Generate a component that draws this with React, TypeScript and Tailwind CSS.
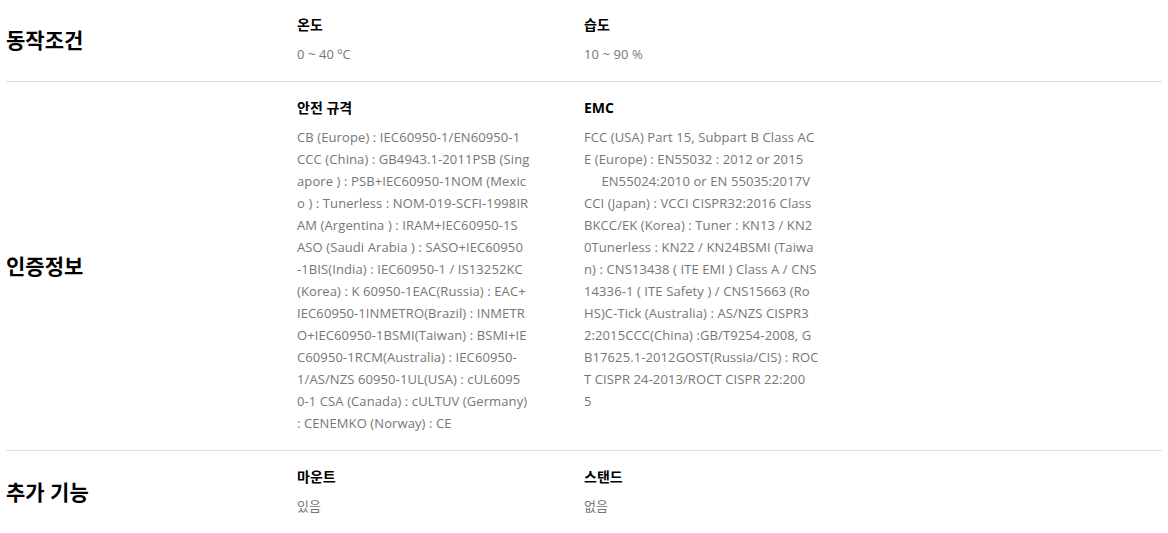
import React from "react";

const font = { fontFamily: '"Open Sans", "Noto Sans CJK KR", sans-serif' };

const safety = [
  "CB (Europe) : IEC60950-1/EN60950-1",
  "CCC (China) : GB4943.1-2011PSB (Sing",
  "apore ) : PSB+IEC60950-1NOM (Mexic",
  "o ) : Tunerless : NOM-019-SCFI-1998IR",
  "AM (Argentina ) : IRAM+IEC60950-1S",
  "ASO (Saudi Arabia ) : SASO+IEC60950",
  "-1BIS(India) : IEC60950-1 / IS13252KC",
  "(Korea) : K 60950-1EAC(Russia) : EAC+",
  "IEC60950-1INMETRO(Brazil) : INMETR",
  "O+IEC60950-1BSMI(Taiwan) : BSMI+IE",
  "C60950-1RCM(Australia) : IEC60950-",
  "1/AS/NZS 60950-1UL(USA) : cUL6095",
  "0-1 CSA (Canada) : cULTUV (Germany)",
  ": CENEMKO (Norway) : CE",
];

const emc = [
  "FCC (USA) Part 15, Subpart B Class AC",
  "E (Europe) : EN55032 : 2012 or 2015",
  "     EN55024:2010 or EN 55035:2017V",
  "CCI (Japan) : VCCI CISPR32:2016 Class",
  "BKCC/EK (Korea) : Tuner : KN13 / KN2",
  "0Tunerless : KN22 / KN24BSMI (Taiwa",
  "n) : CNS13438 ( ITE EMI ) Class A / CNS",
  "14336-1 ( ITE Safety ) / CNS15663 (Ro",
  "HS)C-Tick (Australia) : AS/NZS CISPR3",
  "2:2015CCC(China) :GB/T9254-2008, G",
  "B17625.1-2012GOST(Russia/CIS) : ROC",
  "T CISPR 24-2013/ROCT CISPR 22:200",
  "5",
];

function Cell({ title, lines }: { title: string; lines: string[] }) {
  return (
    <div className="flex flex-col">
      <div className="text-[14px] leading-[20px] font-bold text-black">{title}</div>
      <div className="mt-[8px] text-[13px] leading-[22px] text-[#767676] tracking-[0.1px]">
        {lines.map((l, i) => (
          <div key={i} className="whitespace-pre">
            {l}
          </div>
        ))}
      </div>
    </div>
  );
}

function Row({
  label,
  a,
  b,
  last,
}: {
  label: string;
  a: { title: string; lines: string[] };
  b: { title: string; lines: string[] };
  last?: boolean;
}) {
  return (
    <div
      className={`grid grid-cols-[291px_287px_287px_1fr] pt-[16px] pb-[16px] ${
        last ? "" : "border-b border-[#dddddd]"
      }`}
    >
      <div className="flex items-center text-[21px] font-bold text-black leading-[30px]">
        {label}
      </div>
      <Cell title={a.title} lines={a.lines} />
      <Cell title={b.title} lines={b.lines} />
      <div />
    </div>
  );
}

export default function App() {
  return (
    <div className="w-[1168px] h-[533px] bg-white px-[6px] overflow-hidden" style={font}>
      <div className="-mt-[1px]">
        <Row
          label="동작조건"
          a={{ title: "온도", lines: ["0 ~ 40 ºC"] }}
          b={{ title: "습도", lines: ["10 ~ 90 %"] }}
        />
        <Row
          label="인증정보"
          a={{ title: "안전 규격", lines: safety }}
          b={{ title: "EMC", lines: emc }}
        />
        <Row
          label="추가 기능"
          a={{ title: "마운트", lines: ["있음"] }}
          b={{ title: "스탠드", lines: ["없음"] }}
          last
        />
      </div>
    </div>
  );
}
